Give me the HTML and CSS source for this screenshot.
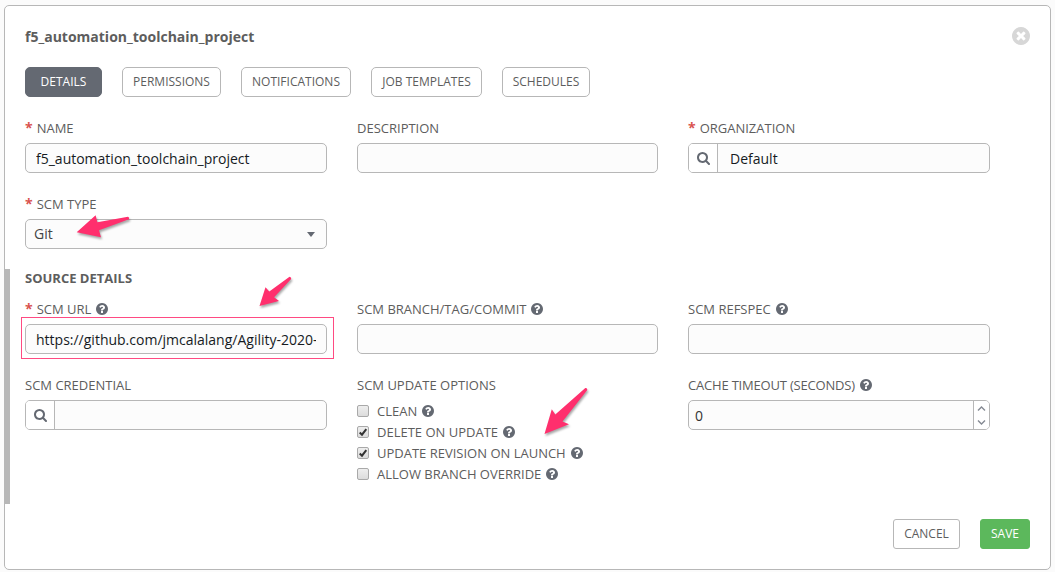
FILE: index.html
```html
<!DOCTYPE html>
<html lang="en">
<head>
<meta charset="utf-8">
<title>f5_automation_toolchain_project</title>
<link rel="stylesheet" href="styles.css">
</head>
<body>
<svg class="defs" width="0" height="0" aria-hidden="true">
  <symbol id="help" viewBox="128 128 1536 1536"><path d="M1024 1376v-192q0-14-9-23t-23-9h-192q-14 0-23 9t-9 23v192q0 14 9 23t23 9h192q14 0 23-9t9-23zm256-672q0-88-55.5-163t-138.5-116-170-41q-243 0-371 213-15 24 8 42l132 100q7 6 19 6 16 0 25-12 53-68 86-92 34-24 86-24 48 0 85.5 26t37.5 59q0 38-20 61t-68 45q-63 28-115.5 86.5t-52.5 125.5v36q0 14 9 23t23 9h192q14 0 23-9t9-23q0-19 21.5-49.5t54.5-49.5q32-18 49-28.5t46-35 44.5-48 28-60.5 12.5-81zm384 192q0 209-103 385.5t-279.5 279.5-385.5 103-385.5-103-279.5-279.5-103-385.5 103-385.5 279.5-279.5 385.5-103 385.5 103 279.5 279.5 103 385.5z"/></symbol>
  <symbol id="close" viewBox="128 128 1536 1536"><path d="M1277 1122q0-26-19-45l-181-181 181-181q19-19 19-45 0-27-19-46l-90-90q-19-19-46-19-26 0-45 19l-181 181-181-181q-19-19-45-19-27 0-46 19l-90 90q-19 19-19 46 0 26 19 45l181 181-181 181q-19 19-19 45 0 27 19 46l90 90q19 19 46 19 26 0 45-19l181-181 181 181q19 19 45 19 27 0 46-19l90-90q19-19 19-46zm387-226q0 209-103 385.5t-279.5 279.5-385.5 103-385.5-103-279.5-279.5-103-385.5 103-385.5 279.5-279.5 385.5-103 385.5 103 279.5 279.5 103 385.5z"/></symbol>
  <symbol id="search" viewBox="64 128 1664 1664"><path d="M1216 832q0-185-131.5-316.5t-316.5-131.5-316.5 131.5-131.5 316.5 131.5 316.5 316.5 131.5 316.5-131.5 131.5-316.5zm512 832q0 52-38 90t-90 38q-54 0-90-38l-343-342q-179 124-399 124-143 0-273.5-55.5t-225-150-150-225-55.5-273.5 55.5-273.5 150-225 225-150 273.5-55.5 273.5 55.5 225 150 150 225 55.5 273.5q0 220-124 399l343 343q37 37 37 90z"/></symbol>
</svg>
<main class="panel">
  <header class="panel-header">
    <h1 class="title">f5_automation_toolchain_project</h1>
    <svg class="close-icon"><use href="#close"/></svg>
  </header>
  <nav class="tabs">
    <button class="btn tab-details">DETAILS</button>
    <button class="btn tab-permissions">PERMISSIONS</button>
    <button class="btn tab-notifications">NOTIFICATIONS</button>
    <button class="btn tab-templates">JOB TEMPLATES</button>
    <button class="btn tab-schedules">SCHEDULES</button>
  </nav>
  <section class="fields">
    <div class="field">
      <label class="label"><span class="required">*</span>NAME</label>
      <input class="control" type="text" value="f5_automation_toolchain_project">
    </div>
    <div class="field">
      <label class="label">DESCRIPTION</label>
      <input class="control" type="text">
    </div>
    <div class="field">
      <label class="label"><span class="required">*</span>ORGANIZATION</label>
      <div class="lookup"><span class="lookup-btn"><svg class="search-icon"><use href="#search"/></svg></span><input class="lookup-input" type="text" value="Default"></div>
    </div>
    <div class="field">
      <label class="label"><span class="required">*</span>SCM TYPE</label>
      <div class="control select"><span>Git</span><span class="caret"></span></div>
    </div>
  </section>
  <section class="source">
    <h2 class="section-title">SOURCE DETAILS</h2>
    <div class="fields">
      <div class="field">
        <label class="label"><span class="required">*</span>SCM URL<svg class="help-icon"><use href="#help"/></svg></label>
        <div class="marked"><input class="control" type="text" value="https://github.com/jmcalalang/Agility-2020-"></div>
      </div>
      <div class="field">
        <label class="label">SCM BRANCH/TAG/COMMIT<svg class="help-icon"><use href="#help"/></svg></label>
        <input class="control" type="text">
      </div>
      <div class="field">
        <label class="label">SCM REFSPEC<svg class="help-icon"><use href="#help"/></svg></label>
        <input class="control" type="text">
      </div>
      <div class="field">
        <label class="label">SCM CREDENTIAL</label>
        <div class="lookup"><span class="lookup-btn"><svg class="search-icon"><use href="#search"/></svg></span><input class="lookup-input" type="text"></div>
      </div>
      <div class="field">
        <label class="label">SCM UPDATE OPTIONS</label>
        <div class="options">
          <label class="option"><span class="box"></span>CLEAN<svg class="help-icon"><use href="#help"/></svg></label>
          <label class="option"><span class="box"><svg class="tick" viewBox="0 0 10 10"><path d="M1.7 5.5 4 7.7 8.3 2.2"/></svg></span>DELETE ON UPDATE<svg class="help-icon"><use href="#help"/></svg></label>
          <label class="option"><span class="box"><svg class="tick" viewBox="0 0 10 10"><path d="M1.7 5.5 4 7.7 8.3 2.2"/></svg></span>UPDATE REVISION ON LAUNCH<svg class="help-icon"><use href="#help"/></svg></label>
          <label class="option"><span class="box"></span>ALLOW BRANCH OVERRIDE<svg class="help-icon"><use href="#help"/></svg></label>
        </div>
      </div>
      <div class="field">
        <label class="label label-tight">CACHE TIMEOUT (SECONDS)<svg class="help-icon"><use href="#help"/></svg></label>
        <div class="spinner"><span class="spinner-value">0</span><span class="spinner-arrows"><svg class="chevron" viewBox="0 0 9 5"><path d="M1 4.5 4.5 1 8 4.5"/></svg><svg class="chevron" viewBox="0 0 9 5"><path d="M1 .5 4.5 4 8 .5"/></svg></span></div>
      </div>
    </div>
  </section>
  <footer class="actions">
    <button class="btn cancel">CANCEL</button>
    <button class="btn save">SAVE</button>
  </footer>
</main>
<svg class="arrows" viewBox="0 0 1055 572">
  <path d="M76.7 232.3 95.6 215.3 97.4 222.3 128 216.8Q129.8 217.5 129 219.3L99 230.3 101 237.3Z"/>
  <path d="M259.5 306 265.5 287.3 269.3 291.5 289.5 276.7Q291.5 277 291.2 279L274.1 297.2 279 301Z"/>
  <path d="M544.5 434 551.8 409.3 555.3 414.5 585.3 388Q587.5 387.8 587.3 390L562.5 421.5 569 424.3Z"/>
</svg>
</body>
</html>
```
FILE: styles.css
```css
* { box-sizing: border-box; }

body {
  margin: 0;
  padding: 5px 4px 0;
  height: 572px;
  overflow: hidden;
  background: #fbfbfb;
  color: #5d5d5d;
  font: 13px/20px "Open Sans", sans-serif;
}

.defs { position: absolute; }

.panel {
  width: 1047px;
  height: 565px;
  border: 1px solid #b7b7b7;
  border-radius: 5px;
  background: #fff;
}

.panel-header {
  display: flex;
  justify-content: space-between;
  align-items: center;
  height: 61px;
  padding: 0 20px;
}

.title {
  margin: 0;
  font-size: 14px;
  font-weight: 700;
}

.close-icon {
  width: 18px;
  height: 18px;
  margin: 0 -.45px 2px 0;
  fill: #d7d7d7;
}

.tabs {
  display: flex;
  gap: 20px;
  padding: 0 20px;
}

.btn {
  height: 30px;
  padding: 0;
  border: 1px solid #b7b7b7;
  border-radius: 5px;
  background: #fff;
  color: #5d5d5d;
  font: 12px/28px "Open Sans", sans-serif;
}

.tab-details {
  width: 77px;
  border-color: #646972;
  background: #646972;
  color: #fff;
}

.tab-permissions { width: 99px; }
.tab-notifications { width: 110px; }
.tab-templates { width: 111px; }
.tab-schedules { width: 88px; }

.fields {
  display: grid;
  grid-template-columns: 302px 301px 302px;
  column-gap: 30px;
  row-gap: 21px;
  padding: 21px 20px 0;
}

.label {
  display: flex;
  align-items: center;
  height: 20px;
  margin-bottom: 5px;
}

.label-tight { letter-spacing: -.19px; }

.required {
  margin-right: 4px;
  color: #d9534f;
  font-size: 14px;
  font-weight: 700;
}

.help-icon {
  width: 12px;
  height: 12px;
  margin-left: 5px;
  fill: #646972;
}

.control, .lookup, .spinner {
  display: flex;
  width: 100%;
  height: 30px;
  border: 1px solid #b7b7b7;
  border-radius: 5px;
  background: #fcfcfc;
}

.control {
  padding: 0 10px;
  color: #161b1f;
  font: 14px/28px "Open Sans", sans-serif;
}

.select {
  justify-content: space-between;
  align-items: center;
  padding: 0 11px 0 8px;
  color: #444;
}

.caret {
  border: 4px solid transparent;
  border-top: 5px solid #646972;
  border-bottom: 0;
}

.lookup-btn {
  display: flex;
  align-items: center;
  justify-content: center;
  width: 29px;
  border-right: 1px solid #b7b7b7;
  border-radius: 4px 0 0 4px;
  background: #fff;
}

.search-icon {
  width: 13px;
  height: 13px;
  fill: #646972;
}

.lookup-input {
  flex: 1;
  min-width: 0;
  padding: 2px 12px 0;
  border: 0;
  background: none;
  color: #161b1f;
  font: 14px/26px "Open Sans", sans-serif;
}

.source {
  height: 235px;
  margin-top: 20px;
  border-left: 5px solid #b7b7b7;
}

.source .fields { padding: 11px 15px 0; }

.section-title {
  margin: 0;
  padding-left: 15px;
  font-size: 13px;
  font-weight: 700;
  line-height: 19px;
}

.marked { position: relative; }

.marked::after {
  content: "";
  position: absolute;
  inset: -7px -7px -5px -4px;
  border: 1px solid #ff4a82;
  pointer-events: none;
}

.option {
  display: flex;
  align-items: center;
  height: 21px;
}

.box {
  width: 12px;
  height: 12px;
  margin-right: 8px;
  border: 1px solid #a9a9a9;
  border-radius: 2px;
  background: linear-gradient(#eee, #dcdcdc);
}

.tick {
  display: block;
  width: 10px;
  height: 10px;
  fill: none;
  stroke: #333;
  stroke-width: 2;
}

.spinner-value {
  flex: 1;
  padding-left: 6px;
  color: #333;
  font-size: 14px;
  line-height: 29px;
}

.spinner-arrows {
  display: flex;
  flex-direction: column;
  align-items: center;
  justify-content: space-between;
  width: 16px;
  padding: 5px 0 4px;
  border-left: 1px solid #b7b7b7;
  border-radius: 0 4px 4px 0;
  background: #fff;
}

.chevron {
  width: 9px;
  height: 5px;
  fill: none;
  stroke: #848992;
  stroke-width: 1.4;
}

.actions {
  display: flex;
  justify-content: flex-end;
  gap: 20px;
  padding: 15px 20px 0;
}

.cancel { width: 67px; border-radius: 3px; }

.save {
  width: 50px;
  border-color: #5cb85c;
  border-radius: 3px;
  background: #5cb85c;
  color: #fff;
}

.arrows {
  position: absolute;
  top: 0;
  left: 0;
  width: 1055px;
  height: 572px;
  fill: #ff2f6d;
  filter: drop-shadow(1px 2px 1px rgba(0, 0, 0, .35));
  pointer-events: none;
}
```
